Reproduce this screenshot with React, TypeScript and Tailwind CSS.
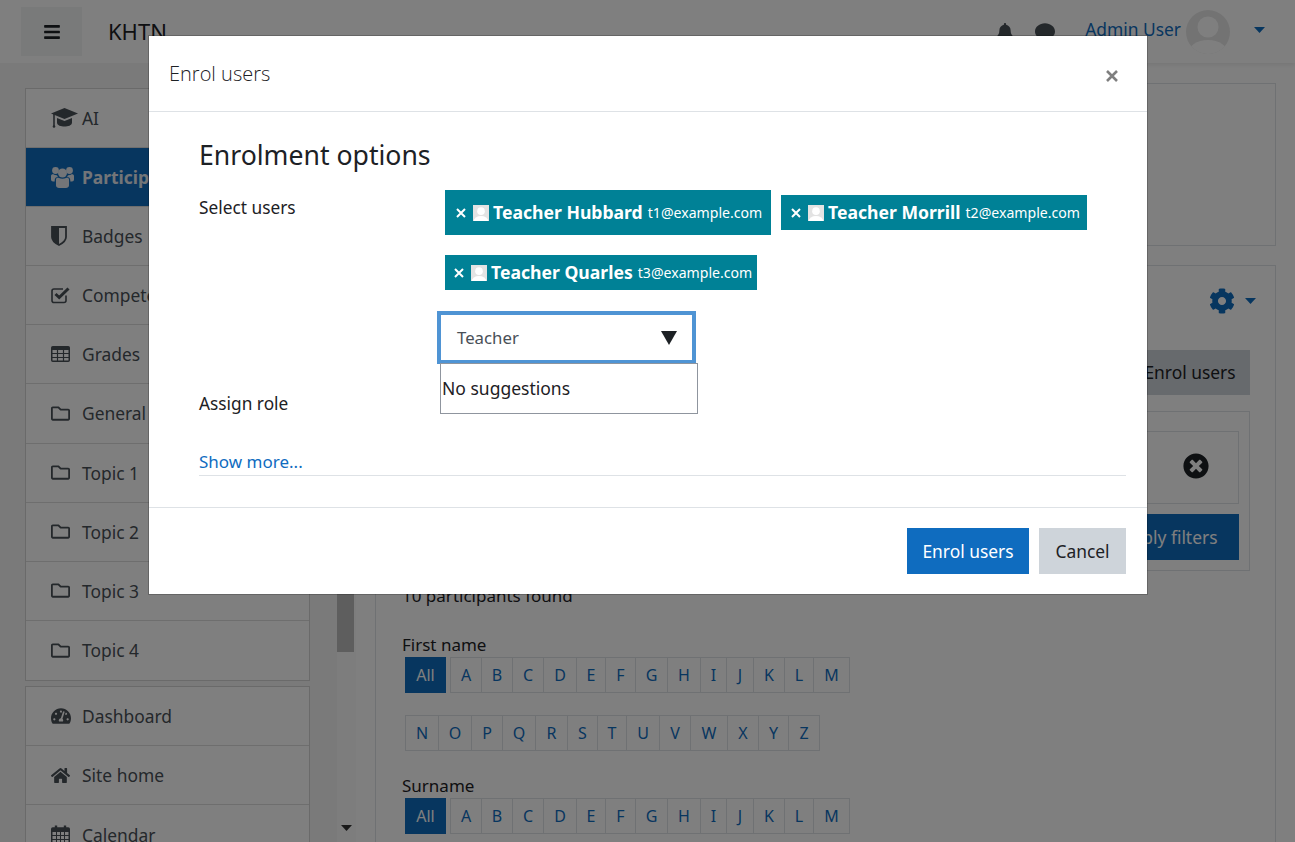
import { FaBars, FaBell, FaCog, FaComment, FaHome, FaRegFolder, FaTachometerAlt, FaTimesCircle } from 'react-icons/fa';

const CapIcon = () => (
  <svg width="27" height="22" viewBox="0 0 27 22" fill="currentColor">
    <path d="M13.5 1 L27 6.5 L13.5 12 L0 6.5 Z" />
    <path d="M6 11 L13.5 14 L21 11 V15.5 C21 18.5 17 19.5 13.5 19.5 C10 19.5 6 18.5 6 15.5 Z" />
    <path d="M3 7 V19" stroke="currentColor" strokeWidth="1.6" />
    <circle cx="3" cy="19.5" r="1.3" />
  </svg>
);

const UsersIcon = () => (
  <svg width="23" height="22" viewBox="0 0 23 22" fill="currentColor">
    <circle cx="4.5" cy="4.5" r="3.4" />
    <circle cx="18.5" cy="4.5" r="3.4" />
    <circle cx="11.5" cy="7" r="4.5" />
    <path d="M5 13.5 C5 12 6.5 11.5 8 12 C10 13 13 13 15 12 C16.5 11.5 18 12 18 13.5 V19.5 C18 21 16.5 22 15 22 H8 C6.5 22 5 21 5 19.5 Z" />
    <path d="M0 10 C0 8.5 1.5 8 3 8.5 C4 9.2 5 9.2 6 9.3 C6.3 10 6.6 10.6 7 11 C5 11 3.7 12 3.7 14.5 V15.5 H2 C1 15.5 0 14.7 0 13.5 Z" />
    <path d="M23 10 C23 8.5 21.5 8 20 8.5 C19 9.2 18 9.2 17 9.3 C16.7 10 16.4 10.6 16 11 C18 11 19.3 12 19.3 14.5 V15.5 H21 C22 15.5 23 14.7 23 13.5 Z" />
  </svg>
);

const ShieldIcon = () => (
  <svg width="16" height="20" viewBox="0 0 16 20" fill="currentColor">
    <path d="M1 1 H15 V11 C15 15 11 17.5 8 19 C5 17.5 1 15 1 11 Z" fill="none" stroke="currentColor" strokeWidth="1.8" />
    <path d="M1 1 H8 V19 C5 17.5 1 15 1 11 Z" />
  </svg>
);

const CheckSquareIcon = () => (
  <svg width="20" height="18" viewBox="0 0 20 18" fill="none" stroke="currentColor">
    <path d="M15 9.5 V14.5 C15 15.8 14 16.5 13 16.5 H3 C2 16.5 1 15.8 1 14.5 V5 C1 3.8 2 3 3 3 H12" strokeWidth="1.6" />
    <path d="M4.5 8 L8.2 11.5 L17.5 2.5" strokeWidth="3" />
  </svg>
);

const TableIcon = () => (
  <svg width="19" height="16" viewBox="0 0 19 16" fill="none" stroke="currentColor">
    <rect x="0.75" y="0.75" width="17.5" height="14.5" rx="1" strokeWidth="1.5" />
    <path d="M1 2.5 H18" strokeWidth="3" />
    <path d="M1 7.5 H18 M1 11.5 H18 M6.5 3 V15 M12.5 3 V15" strokeWidth="1.2" />
  </svg>
);

const CalendarIcon = () => (
  <svg width="19" height="20" viewBox="0 0 19 20" fill="none" stroke="currentColor">
    <rect x="0.75" y="3" width="17.5" height="16.25" rx="1" strokeWidth="1.5" />
    <path d="M1 5 H18" strokeWidth="4" />
    <path d="M1 10.5 H18 M1 14.5 H18 M5.5 7 V19 M9.5 7 V19 M13.5 7 V19" strokeWidth="1" />
    <path d="M5 0.5 V4.5 M14 0.5 V4.5" strokeWidth="2.4" />
  </svg>
);

const Caret = ({ className }: { className?: string }) => (
  <svg width="11" height="6" viewBox="0 0 11 6" className={className}>
    <path d="M0 0 H11 L5.5 6 Z" fill="currentColor" />
  </svg>
);

const Person = ({ className }: { className?: string }) => (
  <svg viewBox="0 0 44 44" className={className}>
    <circle cx="22" cy="17" r="10.5" fill="currentColor" />
    <ellipse cx="22" cy="44" rx="20" ry="14" fill="currentColor" />
  </svg>
);

const courseNav = [
  { label: 'AI', icon: <CapIcon /> },
  { label: 'Participants', icon: <UsersIcon />, active: true },
  { label: 'Badges', icon: <ShieldIcon /> },
  { label: 'Competencies', icon: <CheckSquareIcon /> },
  { label: 'Grades', icon: <TableIcon /> },
  { label: 'General', icon: <FaRegFolder size={19} /> },
  { label: 'Topic 1', icon: <FaRegFolder size={19} /> },
  { label: 'Topic 2', icon: <FaRegFolder size={19} /> },
  { label: 'Topic 3', icon: <FaRegFolder size={19} /> },
  { label: 'Topic 4', icon: <FaRegFolder size={19} /> },
];

const siteNav = [
  { label: 'Dashboard', icon: <FaTachometerAlt size={20} /> },
  { label: 'Site home', icon: <FaHome size={19} /> },
  { label: 'Calendar', icon: <CalendarIcon /> },
];

const firstRow = [
  { l: 'A', w: 'w-[31px]' },
  { l: 'B', w: 'w-[31px]' },
  { l: 'C', w: 'w-[31px]' },
  { l: 'D', w: 'w-[33px]' },
  { l: 'E', w: 'w-[29px]' },
  { l: 'F', w: 'w-[30px]' },
  { l: 'G', w: 'w-[32px]' },
  { l: 'H', w: 'w-[33px]' },
  { l: 'I', w: 'w-[26px]' },
  { l: 'J', w: 'w-[27px]' },
  { l: 'K', w: 'w-[31px]' },
  { l: 'L', w: 'w-[29px]' },
  { l: 'M', w: 'w-[35px]' },
];

const secondRow = [
  { l: 'N', w: 'w-[33px]' },
  { l: 'O', w: 'w-[33px]' },
  { l: 'P', w: 'w-[31px]' },
  { l: 'Q', w: 'w-[33px]' },
  { l: 'R', w: 'w-[32px]' },
  { l: 'S', w: 'w-[30px]' },
  { l: 'T', w: 'w-[29px]' },
  { l: 'U', w: 'w-[33px]' },
  { l: 'V', w: 'w-[31px]' },
  { l: 'W', w: 'w-[37px]' },
  { l: 'X', w: 'w-[31px]' },
  { l: 'Y', w: 'w-[30px]' },
  { l: 'Z', w: 'w-[30px]' },
];

const tags = [
  { name: 'Teacher Hubbard', email: 't1@example.com', box: 'h-[45px] w-[326px] pl-[11px]' },
  { name: 'Teacher Morrill', email: 't2@example.com', box: 'h-[35px] w-[306px] pl-[10px] ml-[10px]' },
  { name: 'Teacher Quarles', email: 't3@example.com', box: 'h-[35px] w-[312px] pl-[9px]' },
];

const NavCard = ({ items, className }: { items: { label: string; icon: React.ReactNode; active?: boolean }[]; className?: string }) => (
  <div className={`w-[285px] border border-[#d5d5d5] bg-white ${className ?? ''}`}>
    {items.map((item) => (
      <div
        key={item.label}
        className={`flex h-[59.1px] items-center border-b border-[#dcdcdc] pl-[25px] text-[17.4px] last:border-b-0 ${
          item.active ? 'bg-[#0f6cbf] font-bold text-[#e6ebf0]' : 'text-[#495057]'
        }`}
      >
        <span className="flex w-[31px] shrink-0 items-center">{item.icon}</span>
        {item.label}
      </div>
    ))}
  </div>
);

const Pager = ({ row, all }: { row: { l: string; w: string }[]; all?: boolean }) => (
  <div className="flex h-[36px] items-stretch">
    {all && (
      <div className="mr-[4px] flex w-[41px] items-center justify-center bg-[#0f6cbf] text-[16px] text-white">All</div>
    )}
    <div className="flex border border-[#dee2e6]">
      {row.map((c) => (
        <div
          key={c.l}
          className={`flex items-center justify-center border-r border-[#dee2e6] text-[16px] text-[#0f6cbf] last:border-r-0 ${c.w}`}
        >
          {c.l}
        </div>
      ))}
    </div>
  </div>
);

const App = () => {
  return (
    <div className="relative h-[842px] overflow-hidden bg-white font-['Noto_Sans','Open_Sans',sans-serif] text-[#1d2125]">
      <header className="flex h-[63px] items-center bg-white pl-[21px] pr-[30px] shadow-[0_2px_4px_rgba(0,0,0,0.08)]">
        <button type="button" className="flex h-[49px] w-[61px] items-center justify-center bg-[#f2f4f5] text-[#1d2125]">
          <FaBars size={18} />
        </button>
        <span className="ml-[26px] text-[22px]">KHTN</span>
        <div className="ml-auto flex items-center text-[#495057]">
          <FaBell size={18} />
          <span className="ml-[21px]">
            <FaComment size={20} />
          </span>
          <span className="ml-[30px] mt-[-4px] text-[17.4px] text-[#0f6cbf]">Admin User</span>
          <span className="ml-[5px] flex h-[44px] w-[44px] items-end justify-center overflow-hidden rounded-full bg-[#e7e7e7]">
            <Person className="h-[44px] w-[44px] text-white" />
          </span>
          <span className="ml-[24px] mt-[-4px] text-[#0f6cbf]">
            <Caret />
          </span>
        </div>
      </header>

      <div className="flex h-[779px] overflow-hidden">
        <aside className="relative flex w-[356px] shrink-0 bg-[#f4f4f4] pl-[25px] pt-[25px]">
          <div>
            <NavCard items={courseNav} />
            <NavCard items={siteNav} className="mt-[5px]" />
          </div>
          <div className="absolute bottom-0 right-0 top-0 w-[19px] bg-[#fafafa]">
            <div className="absolute left-0 top-[140px] h-[449px] w-[17px] bg-[#bdbdbd]" />
            <span className="absolute bottom-[11px] left-[4px] text-[#333]">
              <Caret />
            </span>
          </div>
        </aside>

        <main className="flex-1 px-[19px] pt-[20px]">
          <div className="h-[163px] border border-[#dee2e6]" />
          <div className="mt-[19px] h-[620px] border border-[#dee2e6] pl-[26px] pr-[25px]">
            <div className="flex h-[84px] items-center justify-end pb-[14px] text-[#0f6cbf]">
              <FaCog size={26} />
              <span className="ml-[10px] mr-[-6px]">
                <Caret />
              </span>
            </div>
            <div className="flex justify-end">
              <button type="button" className="h-[45px] w-[120px] bg-[#ced4da] text-[17.4px]">
                Enrol users
              </button>
            </div>
            <div className="mt-[16px] h-[160px] border border-[#dee2e6] px-[10px] pt-[19px]">
              <div className="flex h-[73px] items-center justify-end border border-[#dee2e6] pr-[29px] text-[#1d2125]">
                <FaTimesCircle size={26} className="mt-[-4px]" />
              </div>
              <div className="mt-[10px] flex justify-end">
                <button type="button" className="h-[46px] w-[140px] bg-[#0f6cbf] text-[17.4px] text-white">
                  Apply filters
                </button>
              </div>
            </div>
            <p className="mt-[12px] text-[17px]">10 participants found</p>
            <p className="mt-[23px] text-[17px] leading-[25px]">First name</p>
            <div className="ml-[3px]">
              <Pager row={firstRow} all />
              <div className="mt-[22px]">
                <Pager row={secondRow} />
              </div>
            </div>
            <p className="mt-[23px] text-[17px] leading-[24px]">Surname</p>
            <div className="ml-[3px]">
              <Pager row={firstRow} all />
            </div>
          </div>
        </main>
      </div>

      {/* backdrop */}
      <div className="absolute inset-0 bg-black/50" />

      {/* modal */}
      <div className="absolute left-[148px] top-[35px] flex h-[560px] w-[1000px] flex-col border border-black/20 bg-white bg-clip-padding">
        <div className="flex h-[76px] items-center justify-between border-b border-[#dee2e6] pl-[20px] pr-[28px]">
          <h5 className="font-['Open_Sans',sans-serif] text-[20px] font-light text-[#1d2125]">Enrol users</h5>
          <svg width="14" height="14" viewBox="0 0 14 14" className="mt-[4px] text-[#7f7f7f]">
            <path d="M2 2 L12 12 M12 2 L2 12" stroke="currentColor" strokeWidth="2.6" />
          </svg>
        </div>

        <div className="flex-1 pl-[50px] pr-[21px]">
          <h3 className="mt-[23px] text-[26.6px] leading-[40px]">Enrolment options</h3>
          <div className="mt-[15px] flex">
            <label className="w-[246px] shrink-0 pt-[6px] text-[17.3px] leading-[24px]">Select users</label>
            <div>
              <div className="flex w-[680px] flex-wrap items-center gap-y-[20px]">
                {tags.map((t) => (
                  <div key={t.name} className={`flex items-center bg-[#008196] text-white ${t.box}`}>
                    <svg width="10" height="10" viewBox="0 0 10 10">
                      <path d="M1 1 L9 9 M9 1 L1 9" stroke="currentColor" strokeWidth="2" />
                    </svg>
                    <span className="ml-[7px] flex h-[16px] w-[16px] items-end justify-center overflow-hidden bg-[#e3e3e3]">
                      <Person className="h-[16px] w-[16px] text-white" />
                    </span>
                    <span className="ml-[4px] whitespace-nowrap text-[17.6px] font-bold">{t.name}</span>
                    <span className="ml-[5px] whitespace-nowrap text-[14.1px]">{t.email}</span>
                  </div>
                ))}
              </div>
              <div className="relative ml-[-8px] mt-[21px] flex h-[53px] w-[259px] items-center justify-between border-[4px] border-[#4f94d4] pl-[16px] pr-[15px] text-[16.8px] text-[#495057]">
                <span className="mt-[1px]">Teacher</span>
                <svg width="16" height="14" viewBox="0 0 16 14" className="text-[#1d2125]">
                  <path d="M0 0 H16 L8 14 Z" fill="currentColor" />
                </svg>
                <div className="absolute left-[-1px] top-[48px] flex h-[51px] w-[258px] items-center border border-[#8f959e] bg-white pl-[1px] text-[17.5px] text-[#1d2125]">
                  No suggestions
                </div>
              </div>
            </div>
          </div>
          <div className="mt-[28px] text-[17.3px] leading-[24px]">Assign role</div>
          <div className="mt-[34px] border-b border-[#dee2e6] pb-[1px] text-[17px] leading-[24px] text-[#0f6cbf]">Show more...</div>
        </div>

        <div className="flex h-[87px] items-start justify-end gap-[10px] border-t border-[#dee2e6] pr-[21px] pt-[20px]">
          <button type="button" className="h-[46px] w-[122px] bg-[#0f6cbf] text-[17.4px] text-white">
            Enrol users
          </button>
          <button type="button" className="h-[46px] w-[87px] bg-[#ced4da] text-[17.4px] text-[#1d2125]">
            Cancel
          </button>
        </div>
      </div>
    </div>
  );
};

export default App;
